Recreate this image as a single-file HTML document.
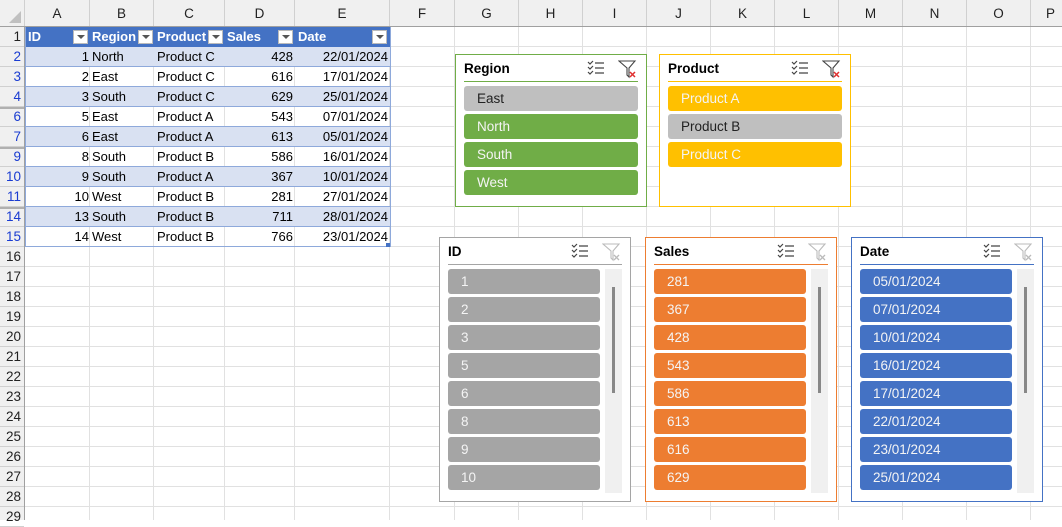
<!DOCTYPE html>
<html><head><meta charset="utf-8"><style>
*{margin:0;padding:0;box-sizing:border-box}
body{width:1062px;height:520px;overflow:hidden;background:#fff;font-family:"Liberation Sans",sans-serif;font-size:13.5px;color:#000;position:relative}
.a{position:absolute}
#grid{left:25px;top:27px;width:1037px;height:493px;background:repeating-linear-gradient(to bottom,transparent 0,transparent 19px,#e1e1e1 19px,#e1e1e1 20px)}
.vl{position:absolute;top:27px;height:493px;width:1px;background:#e1e1e1}
#colh{left:0;top:0;width:1062px;height:27px;background:#f0f0f0;border-bottom:1px solid #a0a0a0}
.ch{position:absolute;top:0;height:26px;line-height:27px;text-align:center;border-right:1px solid #d0d0d0;color:#222;font-size:13.5px}
#rowh{left:0;top:27px;width:25px;height:493px;background:#f0f0f0;border-right:1px solid #a0a0a0}
.rh{position:absolute;left:0;width:24px;height:20px;line-height:20px;text-align:right;padding-right:3px;border-bottom:1px solid #d0d0d0;color:#222;font-size:13.5px}
.rh.f{color:#1a3cd1}
.hid{box-shadow:inset 0 2px 0 #b0b0b0}
.tr{position:absolute;left:25px;width:365px;height:20px;border-bottom:1px solid #8ea9db;line-height:19px;font-size:13px}
.tr.b{background:#d9e1f2}
.tr span{position:absolute;top:0;white-space:nowrap}
.hd{background:#4472c4;color:#fff;font-weight:bold;border-bottom:none}
.dd{position:absolute;top:3px;width:15px;height:14px;background:#fff;border:1px solid #bbb}
.dd:after{content:"";position:absolute;left:3px;top:4px;border-left:4px solid transparent;border-right:4px solid transparent;border-top:4px solid #555}
.sl{position:absolute;background:#fff;border:1px solid}
.st{position:absolute;left:8px;top:6px;font-weight:bold;font-size:13.5px}
.su{position:absolute;left:8px;right:8px;top:26px;height:1px}
.it{position:absolute;height:25px;border-radius:3px;line-height:25px;padding-left:13px;color:#f4f4f4;font-size:13.5px}
.sb{position:absolute;width:17px;background:#f0f0f0}
.th{position:absolute;left:7px;width:3px;background:#888}
.ic{position:absolute}
</style></head><body>
<div class="a" id="grid"></div>
<div class="vl" style="left:89px"></div><div class="vl" style="left:153px"></div><div class="vl" style="left:224px"></div><div class="vl" style="left:294px"></div><div class="vl" style="left:389px"></div><div class="vl" style="left:454px"></div><div class="vl" style="left:518px"></div><div class="vl" style="left:582px"></div><div class="vl" style="left:646px"></div><div class="vl" style="left:710px"></div><div class="vl" style="left:774px"></div><div class="vl" style="left:838px"></div><div class="vl" style="left:902px"></div><div class="vl" style="left:966px"></div><div class="vl" style="left:1030px"></div>

<div class="a" id="colh">
<div class="ch" style="left:0;width:25px"><div style="position:absolute;right:3px;bottom:3px;border-left:12px solid transparent;border-bottom:12px solid #c0c0c0"></div></div>
<div class="ch" style="left:25px;width:65px">A</div><div class="ch" style="left:90px;width:64px">B</div><div class="ch" style="left:154px;width:71px">C</div><div class="ch" style="left:225px;width:70px">D</div><div class="ch" style="left:295px;width:95px">E</div><div class="ch" style="left:390px;width:65px">F</div><div class="ch" style="left:455px;width:64px">G</div><div class="ch" style="left:519px;width:64px">H</div><div class="ch" style="left:583px;width:64px">I</div><div class="ch" style="left:647px;width:64px">J</div><div class="ch" style="left:711px;width:64px">K</div><div class="ch" style="left:775px;width:64px">L</div><div class="ch" style="left:839px;width:64px">M</div><div class="ch" style="left:903px;width:64px">N</div><div class="ch" style="left:967px;width:64px">O</div><div class="ch" style="left:1031px;width:40px">P</div>
</div>

<div class="a" id="rowh">
<div class="rh" style="top:0">1</div><div class="rh f" style="top:20px">2</div><div class="rh f" style="top:40px">3</div><div class="rh f" style="top:60px">4</div><div class="rh f hid" style="top:80px">6</div><div class="rh f" style="top:100px">7</div><div class="rh f hid" style="top:120px">9</div><div class="rh f" style="top:140px">10</div><div class="rh f" style="top:160px">11</div><div class="rh f hid" style="top:180px">14</div><div class="rh f" style="top:200px">15</div><div class="rh" style="top:220px">16</div><div class="rh" style="top:240px">17</div><div class="rh" style="top:260px">18</div><div class="rh" style="top:280px">19</div><div class="rh" style="top:300px">20</div><div class="rh" style="top:320px">21</div><div class="rh" style="top:340px">22</div><div class="rh" style="top:360px">23</div><div class="rh" style="top:380px">24</div><div class="rh" style="top:400px">25</div><div class="rh" style="top:420px">26</div><div class="rh" style="top:440px">27</div><div class="rh" style="top:460px">28</div><div class="rh" style="top:480px">29</div>
</div>

<div class="tr hd" style="top:27px"><span style="left:3px">ID</span><div class="dd" style="left:48px"></div><span style="left:67px">Region</span><div class="dd" style="left:113px"></div><span style="left:132px">Product</span><div class="dd" style="left:183px"></div><span style="left:202px">Sales</span><div class="dd" style="left:253px"></div><span style="left:273px">Date</span><div class="dd" style="left:347px"></div></div>
<div class="tr b" style="top:47px"><span style="right:301px">1</span><span style="left:67px">North</span><span style="left:132px">Product C</span><span style="right:97px">428</span><span style="right:2px">22/01/2024</span></div>
<div class="tr" style="top:67px"><span style="right:301px">2</span><span style="left:67px">East</span><span style="left:132px">Product C</span><span style="right:97px">616</span><span style="right:2px">17/01/2024</span></div>
<div class="tr b" style="top:87px"><span style="right:301px">3</span><span style="left:67px">South</span><span style="left:132px">Product C</span><span style="right:97px">629</span><span style="right:2px">25/01/2024</span></div>
<div class="tr" style="top:107px"><span style="right:301px">5</span><span style="left:67px">East</span><span style="left:132px">Product A</span><span style="right:97px">543</span><span style="right:2px">07/01/2024</span></div>
<div class="tr b" style="top:127px"><span style="right:301px">6</span><span style="left:67px">East</span><span style="left:132px">Product A</span><span style="right:97px">613</span><span style="right:2px">05/01/2024</span></div>
<div class="tr" style="top:147px"><span style="right:301px">8</span><span style="left:67px">South</span><span style="left:132px">Product B</span><span style="right:97px">586</span><span style="right:2px">16/01/2024</span></div>
<div class="tr b" style="top:167px"><span style="right:301px">9</span><span style="left:67px">South</span><span style="left:132px">Product A</span><span style="right:97px">367</span><span style="right:2px">10/01/2024</span></div>
<div class="tr" style="top:187px"><span style="right:301px">10</span><span style="left:67px">West</span><span style="left:132px">Product B</span><span style="right:97px">281</span><span style="right:2px">27/01/2024</span></div>
<div class="tr b" style="top:207px"><span style="right:301px">13</span><span style="left:67px">South</span><span style="left:132px">Product B</span><span style="right:97px">711</span><span style="right:2px">28/01/2024</span></div>
<div class="tr" style="top:227px"><span style="right:301px">14</span><span style="left:67px">West</span><span style="left:132px">Product B</span><span style="right:97px">766</span><span style="right:2px">23/01/2024</span></div>
<div class="a" style="left:25px;top:27px;width:366px;height:220px;border-left:1px solid #8ea9db;border-right:1px solid #8ea9db;pointer-events:none"></div>
<div class="a" style="left:386px;top:243px;width:4px;height:4px;background:#4472c4"></div>

<div class="sl" style="left:455px;top:54px;width:192px;height:153px;border-color:#70ad47">
<div class="st">Region</div>
<svg class="ic" style="left:131px;top:5px" width="18" height="17" viewBox="0 0 18 17"><path d="M1 2l2 2 3-3M1 7l2 2 3-3M1 12l2 2 3-3M8 3h9M8 8h9M8 13h9" stroke="#444" stroke-width="1.2" fill="none"/></svg>
<svg class="ic" style="left:162px;top:5px" width="20" height="19" viewBox="0 0 20 19"><path d="M1 1h16l-6 7v9l-2-2V8z" stroke="#444" stroke-width="1.1" fill="none"/><path d="M12 12l5 5M17 12l-5 5" stroke="#e03030" stroke-width="1.5"/></svg>
<div class="su" style="background:#70ad47"></div>
<div class="it" style="left:8px;top:31px;width:174px;background:#bfbfbf;color:#222">East</div>
<div class="it" style="left:8px;top:59px;width:174px;background:#70ad47">North</div>
<div class="it" style="left:8px;top:87px;width:174px;background:#70ad47">South</div>
<div class="it" style="left:8px;top:115px;width:174px;background:#70ad47">West</div>
</div>

<div class="sl" style="left:659px;top:54px;width:192px;height:153px;border-color:#ffc000">
<div class="st">Product</div>
<svg class="ic" style="left:131px;top:5px" width="18" height="17" viewBox="0 0 18 17"><path d="M1 2l2 2 3-3M1 7l2 2 3-3M1 12l2 2 3-3M8 3h9M8 8h9M8 13h9" stroke="#444" stroke-width="1.2" fill="none"/></svg>
<svg class="ic" style="left:162px;top:5px" width="20" height="19" viewBox="0 0 20 19"><path d="M1 1h16l-6 7v9l-2-2V8z" stroke="#444" stroke-width="1.1" fill="none"/><path d="M12 12l5 5M17 12l-5 5" stroke="#e03030" stroke-width="1.5"/></svg>
<div class="su" style="background:#ffc000"></div>
<div class="it" style="left:8px;top:31px;width:174px;background:#ffc000">Product A</div>
<div class="it" style="left:8px;top:59px;width:174px;background:#bfbfbf;color:#222">Product B</div>
<div class="it" style="left:8px;top:87px;width:174px;background:#ffc000">Product C</div>
</div>

<div class="sl" style="left:439px;top:237px;width:192px;height:265px;border-color:#a5a5a5">
<div class="st">ID</div>
<svg class="ic" style="left:131px;top:5px" width="18" height="17" viewBox="0 0 18 17"><path d="M1 2l2 2 3-3M1 7l2 2 3-3M1 12l2 2 3-3M8 3h9M8 8h9M8 13h9" stroke="#444" stroke-width="1.2" fill="none"/></svg>
<svg class="ic" style="left:162px;top:5px" width="20" height="19" viewBox="0 0 20 19"><path d="M1 1h16l-6 7v9l-2-2V8z" stroke="#bbb" stroke-width="1.1" fill="none"/><path d="M12 12l5 5M17 12l-5 5" stroke="#bbb" stroke-width="1.3"/></svg>
<div class="su" style="background:#a5a5a5"></div>
<div class="it" style="left:8px;top:31px;width:152px;background:#a5a5a5">1</div>
<div class="it" style="left:8px;top:59px;width:152px;background:#a5a5a5">2</div>
<div class="it" style="left:8px;top:87px;width:152px;background:#a5a5a5">3</div>
<div class="it" style="left:8px;top:115px;width:152px;background:#a5a5a5">5</div>
<div class="it" style="left:8px;top:143px;width:152px;background:#a5a5a5">6</div>
<div class="it" style="left:8px;top:171px;width:152px;background:#a5a5a5">8</div>
<div class="it" style="left:8px;top:199px;width:152px;background:#a5a5a5">9</div>
<div class="it" style="left:8px;top:227px;width:152px;background:#a5a5a5">10</div>
<div class="sb" style="left:165px;top:31px;height:224px"><div class="th" style="top:18px;height:106px"></div></div>
</div>

<div class="sl" style="left:645px;top:237px;width:192px;height:265px;border-color:#ed7d31">
<div class="st">Sales</div>
<svg class="ic" style="left:131px;top:5px" width="18" height="17" viewBox="0 0 18 17"><path d="M1 2l2 2 3-3M1 7l2 2 3-3M1 12l2 2 3-3M8 3h9M8 8h9M8 13h9" stroke="#444" stroke-width="1.2" fill="none"/></svg>
<svg class="ic" style="left:162px;top:5px" width="20" height="19" viewBox="0 0 20 19"><path d="M1 1h16l-6 7v9l-2-2V8z" stroke="#bbb" stroke-width="1.1" fill="none"/><path d="M12 12l5 5M17 12l-5 5" stroke="#bbb" stroke-width="1.3"/></svg>
<div class="su" style="background:#ed7d31"></div>
<div class="it" style="left:8px;top:31px;width:152px;background:#ed7d31">281</div>
<div class="it" style="left:8px;top:59px;width:152px;background:#ed7d31">367</div>
<div class="it" style="left:8px;top:87px;width:152px;background:#ed7d31">428</div>
<div class="it" style="left:8px;top:115px;width:152px;background:#ed7d31">543</div>
<div class="it" style="left:8px;top:143px;width:152px;background:#ed7d31">586</div>
<div class="it" style="left:8px;top:171px;width:152px;background:#ed7d31">613</div>
<div class="it" style="left:8px;top:199px;width:152px;background:#ed7d31">616</div>
<div class="it" style="left:8px;top:227px;width:152px;background:#ed7d31">629</div>
<div class="sb" style="left:165px;top:31px;height:224px"><div class="th" style="top:18px;height:106px"></div></div>
</div>

<div class="sl" style="left:851px;top:237px;width:192px;height:265px;border-color:#4472c4">
<div class="st">Date</div>
<svg class="ic" style="left:131px;top:5px" width="18" height="17" viewBox="0 0 18 17"><path d="M1 2l2 2 3-3M1 7l2 2 3-3M1 12l2 2 3-3M8 3h9M8 8h9M8 13h9" stroke="#444" stroke-width="1.2" fill="none"/></svg>
<svg class="ic" style="left:162px;top:5px" width="20" height="19" viewBox="0 0 20 19"><path d="M1 1h16l-6 7v9l-2-2V8z" stroke="#bbb" stroke-width="1.1" fill="none"/><path d="M12 12l5 5M17 12l-5 5" stroke="#bbb" stroke-width="1.3"/></svg>
<div class="su" style="background:#4472c4"></div>
<div class="it" style="left:8px;top:31px;width:152px;background:#4472c4">05/01/2024</div>
<div class="it" style="left:8px;top:59px;width:152px;background:#4472c4">07/01/2024</div>
<div class="it" style="left:8px;top:87px;width:152px;background:#4472c4">10/01/2024</div>
<div class="it" style="left:8px;top:115px;width:152px;background:#4472c4">16/01/2024</div>
<div class="it" style="left:8px;top:143px;width:152px;background:#4472c4">17/01/2024</div>
<div class="it" style="left:8px;top:171px;width:152px;background:#4472c4">22/01/2024</div>
<div class="it" style="left:8px;top:199px;width:152px;background:#4472c4">23/01/2024</div>
<div class="it" style="left:8px;top:227px;width:152px;background:#4472c4">25/01/2024</div>
<div class="sb" style="left:165px;top:31px;height:224px"><div class="th" style="top:18px;height:106px"></div></div>
</div>
</body></html>
